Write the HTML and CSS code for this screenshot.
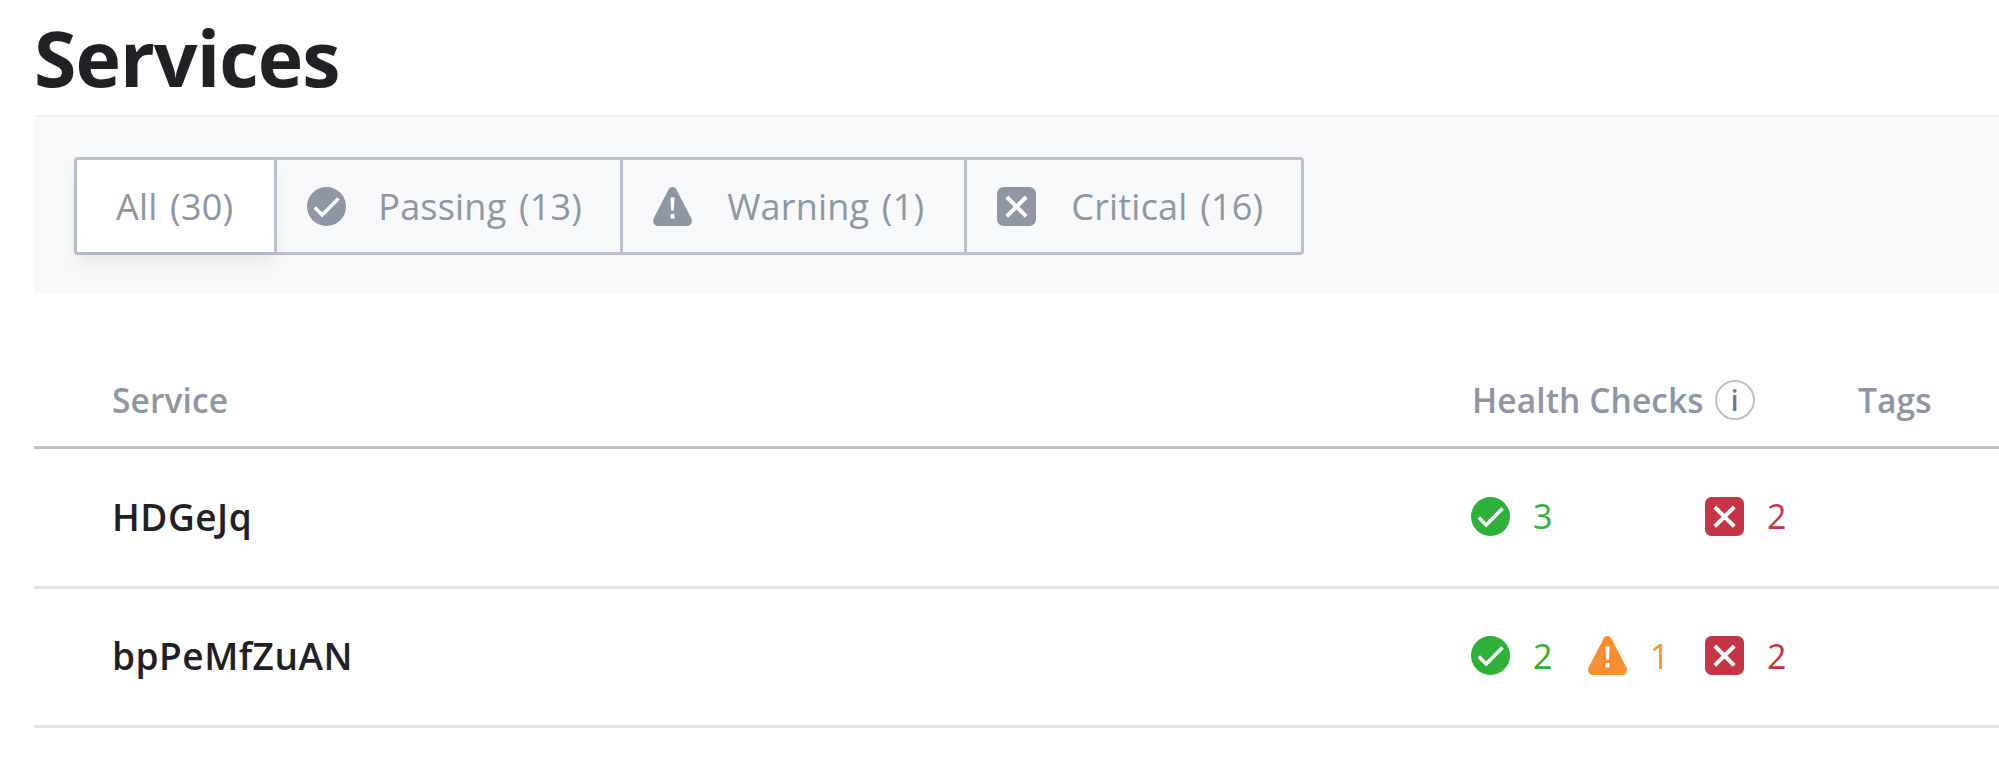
FILE: index.html
```html
<!DOCTYPE html>
<html lang="en">
  <head>
    <meta charset="UTF-8" />
    <title>Services</title>
    <link rel="stylesheet" href="styles.css">
  </head>
  <body>
    <svg class="sprite" xmlns="http://www.w3.org/2000/svg">
      <symbol id="icon-passing" viewBox="0 0 39 39">
        <circle cx="19.5" cy="19.5" r="19.5" fill="currentColor" />
        <path d="M7.8 20.5l7.400 7.400L31.500 11.500" fill="none" stroke="#fff" stroke-width="3.600" />
      </symbol>
      <symbol id="icon-warning" viewBox="0 0 39 39">
        <path d="M15.6 2.4c1.800-3.200 6-3.200 7.800 0l14.900 28.800c1.600 3.300-.4 7.800-4.300 7.800H5c-3.900 0-5.900-4.500-4.300-7.800z" fill="currentColor" />
        <path d="M17.500 10.500h4l-.6 13h-2.800zM17.500 27h4v4.500h-4z" fill="#fff" />
      </symbol>
      <symbol id="icon-critical" viewBox="0 0 39 39">
        <rect width="39" height="39" rx="6.500" fill="currentColor" />
        <path d="M9.800 10l19.400 19.400M29.200 10L9.800 29.400" fill="none" stroke="#fff" stroke-width="4" />
      </symbol>
    </svg>

    <main class="page">
      <h1 class="page-title">Services</h1>

      <div class="toolbar">
        <div class="filter-group">
          <div class="filter-tab active">All (30)</div>
          <div class="filter-tab">
            <svg class="icon"><use href="#icon-passing" /></svg>
            Passing (13)
          </div>
          <div class="filter-tab tab-warning">
            <svg class="icon"><use href="#icon-warning" /></svg>
            Warning (1)
          </div>
          <div class="filter-tab tab-critical">
            <svg class="icon"><use href="#icon-critical" /></svg>
            Critical (16)
          </div>
        </div>
      </div>

      <div class="table">
        <div class="row head">
          <div>Service</div>
          <div class="head-checks">
            Health Checks
            <span class="info-icon">i</span>
          </div>
          <div>Tags</div>
        </div>

        <div class="row">
          <div class="service-name">HDGeJq</div>
          <div class="checks">
            <div class="check passing">
              <svg class="icon"><use href="#icon-passing" /></svg>3
            </div>
            <div class="check"></div>
            <div class="check critical">
              <svg class="icon"><use href="#icon-critical" /></svg>2
            </div>
          </div>
          <div></div>
        </div>

        <div class="row">
          <div class="service-name">bpPeMfZuAN</div>
          <div class="checks">
            <div class="check passing">
              <svg class="icon"><use href="#icon-passing" /></svg>2
            </div>
            <div class="check warning">
              <svg class="icon"><use href="#icon-warning" /></svg>1
            </div>
            <div class="check critical">
              <svg class="icon"><use href="#icon-critical" /></svg>2
            </div>
          </div>
          <div></div>
        </div>
      </div>
    </main>
  </body>
</html>
```

FILE: styles.css
```css
* {
  margin: 0;
  padding: 0;
  box-sizing: border-box;
}

body {
  font-family: "Open Sans", "Noto Sans", sans-serif;
  background-color: #fff;
  color: #1f2124;
  overflow: hidden;
}

.sprite {
  display: none;
}

.page {
  padding-left: 34px;
}

.page-title {
  height: 115px;
  padding-top: 14px;
  font-size: 77px;
  line-height: 88px;
  font-weight: 700;
  letter-spacing: -1px;
}

.toolbar {
  background-color: #f7f8fa;
  border-top: 2px solid #eff0f5;
  padding: 40px 40px 38px;
  height: 178px;
}

.filter-group {
  display: inline-flex;
  height: 98px;
  border: 3px solid #bac1cd;
  border-radius: 4px;
}

.filter-tab {
  display: flex;
  align-items: center;
  gap: 32px;
  padding: 0 38px 0 30px;
  font-size: 36px;
  color: #8e96a3;
  letter-spacing: 0.2px;
  word-spacing: 3px;
  border-left: 3px solid #bac1cd;
}

.filter-tab:first-child {
  border-left: none;
}

.filter-tab.active {
  padding: 0 41px 0 39px;
  background-color: #fff;
  box-shadow: 0 10px 16px rgba(31, 33, 36, 0.08);
}

.filter-tab.tab-warning {
  gap: 35px;
  padding-right: 40px;
}

.filter-tab.tab-critical {
  gap: 35px;
}

.icon {
  width: 39px;
  height: 39px;
  flex-shrink: 0;
}

.row {
  display: grid;
  grid-template-columns: 1359px 387px 1fr;
  align-items: center;
  height: 139.5px;
  padding-left: 78px;
  border-bottom: 3px solid #e1e4ea;
}

.row.head {
  height: 156px;
  padding-top: 60px;
  font-size: 33.5px;
  font-weight: 600;
  letter-spacing: 0.1px;
  color: #8e96a3;
  border-bottom-color: #bac1cd;
}

.head-checks {
  display: flex;
  align-items: center;
  gap: 11px;
  padding-left: 1px;
}

.info-icon {
  display: flex;
  align-items: center;
  justify-content: center;
  width: 40px;
  height: 40px;
  border: 2px solid #bac1cd;
  border-radius: 50%;
  font-size: 28px;
  font-weight: 600;
  color: #727a88;
}

.service-name {
  margin-bottom: 2px;
  font-size: 37px;
  font-weight: 600;
  letter-spacing: 0.5px;
}

.checks {
  display: flex;
  margin-bottom: 2px;
}

.check {
  display: flex;
  align-items: center;
  gap: 23px;
  width: 117px;
  font-size: 34px;
}

.check.passing {
  color: #2eb039;
}

.check.warning {
  color: #fa8e32;
}

.check.critical {
  color: #c73445;
}
```
